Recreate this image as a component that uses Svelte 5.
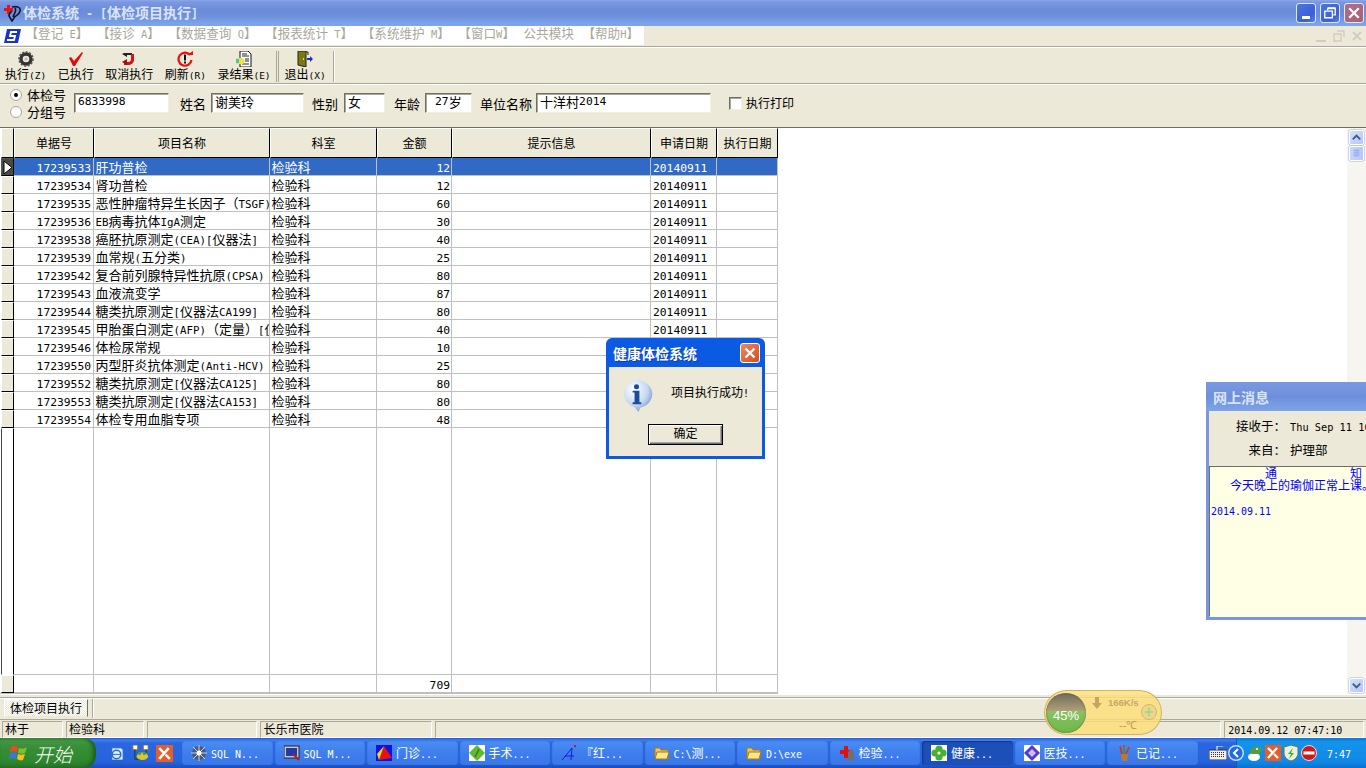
<script>
  const rows = [
    ['17239533','肝功普检','12'],['17239534','肾功普检','12'],['17239535','恶性肿瘤特异生长因子（TSGF)','60'],
    ['17239536','EB病毒抗体IgA测定','30'],['17239538','癌胚抗原测定(CEA)[仪器法]','40'],['17239539','血常规(五分类)','25'],
    ['17239542','复合前列腺特异性抗原(CPSA)','80'],['17239543','血液流变学','87'],['17239544','糖类抗原测定[仪器法CA199]','80'],
    ['17239545','甲胎蛋白测定(AFP)（定量）[仪器法]','40'],['17239546','体检尿常规','10'],['17239550','丙型肝炎抗体测定(Anti-HCV)','25'],
    ['17239552','糖类抗原测定[仪器法CA125]','80'],['17239553','糖类抗原测定[仪器法CA153]','80'],['17239554','体检专用血脂专项','48']
  ];
  const menus = ['【登记 E】','【接诊 A】','【数据查询 Q】','【报表统计 T】','【系统维护 M】','【窗口W】','公共模块','【帮助H】'];
  const heads = ['单据号','项目名称','科室','金额','提示信息','申请日期','执行日期'];
  const tasks = ['SQL N...','SQL M...','门诊...','手术...','『红...','C:\\测...','D:\\exe','检验...','健康...','医技...','已记...'];
  const runs = (s) => s.split(/([\x20-\x7e]+)/).filter(Boolean).map((x) => ({ x, l: /^[\x20-\x7e]/.test(x) }));
</script>

{#snippet t(s)}{#each runs(s) as r}<span class:l={r.l}>{r.x}</span>{/each}{/snippet}

{#snippet taskIcon(i)}
  <svg class="ti" viewBox="0 0 16 16">
    {#if i === 0}
      <circle cx="8" cy="8" r="7" fill="#4a5a78"/><path d="M8 0v16M0 8h16M2 2l12 12M14 2L2 14" stroke="#c8d0e0" stroke-width="1"/><circle cx="8" cy="8" r="2.5" fill="#fff"/>
    {:else if i === 1}
      <rect x="0" y="1" width="15" height="12" fill="#c8c8c8" stroke="#222"/><rect x="2" y="3" width="11" height="8" fill="#2438a8"/><path d="M9 9l6 6" stroke="#b02020" stroke-width="2"/>
    {:else if i === 2}
      <rect width="16" height="16" fill="#1010e0"/><path d="M8 1L16 13L3 15Z" fill="#e81010"/><path d="M8 1L3 15L1 9Z" fill="#f4d800"/>
    {:else if i === 3}
      <rect width="16" height="16" fill="#fff"/><path d="M8 0L16 8L8 16L0 8Z" fill="#58c030"/><path d="M6 12L10 4" stroke="#706020" stroke-width="1.5"/>
    {:else if i === 4}
      <path d="M1 15L11 3L10 15M4 11H13" stroke="#1020d0" fill="none"/><rect x="13" y="0" width="2" height="2" fill="#e01010"/>
    {:else if i === 5 || i === 6}
      <path d="M1 3h5l1 2h7v9H1Z" fill="#f0c850" stroke="#a87818"/><path d="M3 7h12l-2 7H1Z" fill="#fde88c" stroke="#a87818"/>
    {:else if i === 7}
      <path d="M5 1h4v4h4v4H9v4H5V9H1V5h4Z" fill="#e01010"/><path d="M9 7l3-3 3 4-1 5h2v2H7l2-3Z" fill="#707070"/>
    {:else if i === 8}
      <rect width="16" height="16" fill="#fff"/><circle cx="8" cy="4" r="3.6" fill="#48b030"/><circle cx="8" cy="12" r="3.6" fill="#48b030"/><circle cx="4" cy="8" r="3.6" fill="#48b030"/><circle cx="12" cy="8" r="3.6" fill="#48b030"/><circle cx="8" cy="8" r="1.6" fill="#fff"/>
    {:else if i === 9}
      <rect width="16" height="16" fill="#fff"/><path d="M8 0L16 8L8 16L0 8Z" fill="#5838c8"/><path d="M8 4L12 8L8 12L4 8Z" fill="#c8c0f4"/>
    {:else}
      <path d="M5 9h7l-1 7H6Z" fill="#b87838"/><path d="M6 9L4 1M8 9V0M10 9l3-7" stroke="#d83020" stroke-width="1.5"/><path d="M8 9V2" stroke="#38a030" stroke-width="1.5"/>
    {/if}
  </svg>
{/snippet}

<div class="app">
  <header class="title">
    <svg class="ticon" viewBox="0 0 18 18">
      <path d="M0 4h3V1h3v3h3v3H6v3H3V7H0Z" fill="#e8101c"/>
      <path d="M8 3c5-1 9 0 8 4-1 5-5 4-6 7l-2 3-3-5c0-3 1-3 3-5M11 4c2 3-1 6-2 9" fill="none" stroke="#101830" stroke-width="1.6"/>
    </svg>
    <span class="ttext">{@render t('体检系统 - [体检项目执行]')}</span>
    <span class="wbtns">
      <span class="wb"><i class="min"></i></span>
      <span class="wb"><svg viewBox="0 0 19 19"><path d="M7 4.5h8v7h-2M7 4.5v2M4 7.5h8v7H4Z" fill="none" stroke="#fff" stroke-width="1.4"/><path d="M7 4.5h8" stroke="#fff" stroke-width="2"/></svg></span>
      <span class="wb wred"><svg viewBox="0 0 19 19"><path d="M4.5 4.5l10 10M14.5 4.5l-10 10" stroke="#fff" stroke-width="2.4"/></svg></span>
    </span>
  </header>

  <nav class="menubar">
    <div class="menus">
      <svg class="mlogo" viewBox="0 0 17 16">
        <path d="M3 1h14l-3 14H0Z" fill="#1a34c8"/><path d="M13 4H7L6 8h5l-1 4H3" fill="none" stroke="#fff" stroke-width="1.8"/>
      </svg>
      {#each menus as m}<span class="mi">{@render t(m)}</span>{/each}
    </div>
    <div class="mdi">
      <span><i></i></span>
      <span><svg viewBox="0 0 16 14"><path d="M6 2h7v6M3 5h7v7H3Z" fill="none" stroke="#d0cdc0" stroke-width="1.4"/></svg></span>
      <span><svg viewBox="0 0 16 14"><path d="M4 3l8 8M12 3l-8 8" stroke="#d0cdc0" stroke-width="2"/></svg></span>
    </div>
  </nav>

  <section class="toolbar">
    <button class="tb">
      <svg viewBox="0 0 16 16"><circle cx="8" cy="8" r="5" fill="none" stroke="#333" stroke-width="3.4"/><circle cx="8" cy="8" r="7" fill="none" stroke="#555" stroke-width="1.6" stroke-dasharray="2 1.6"/><circle cx="8" cy="8" r="1.6" fill="#bbb"/></svg>
      <span>{@render t('执行(Z)')}</span>
    </button>
    <button class="tb">
      <svg viewBox="0 0 16 16"><path d="M1 7l2-1 3 4 8-9 1 1-8 13h-2Z" fill="#e00c10"/></svg>
      <span>{@render t('已执行')}</span>
    </button>
    <button class="tb">
      <svg viewBox="0 0 16 16"><path d="M3 2h8v2H6v2l-5-3Z" fill="#222"/><path d="M13 3v6c0 3-3 5-6 5H3v-3h4c2 0 3-1 3-3V3Z" fill="#c81818"/><path d="M1 11l5-3v6Z" fill="#a01010"/></svg>
      <span>{@render t('取消执行')}</span>
    </button>
    <button class="tb">
      <svg viewBox="0 0 16 16"><path d="M13 4A6.5 6.5 0 1 0 14.500 9" fill="none" stroke="#e81010" stroke-width="2.2"/><path d="M10 4h6V0Z" fill="#e81010"/><rect x="7" y="3.500" width="2" height="6" fill="#111"/><rect x="7" y="10.500" width="2" height="2" fill="#111"/></svg>
      <span>{@render t('刷新(R)')}</span>
    </button>
    <button class="tb">
      <svg viewBox="0 0 16 16"><path d="M4 0h8l3 3v13H4Z" fill="#fff" stroke="#111"/><path d="M6 3h5M6 5h7M9 8h4M9 10h4M6 13h7" stroke="#222"/><path d="M0 7h7l2 3-2 3H0Z" fill="#f4e040"/><rect x="0" y="8" width="3" height="4" fill="#30c8e8"/></svg>
      <span>{@render t('录结果(E)')}</span>
    </button>
    <i class="grip"></i>
    <button class="tb exit">
      <svg viewBox="0 0 16 16"><path d="M1 0h8v16l-8-2Z" fill="#7a7a10" stroke="#222"/><path d="M9 1h2v3" fill="none" stroke="#222"/><path d="M10 7h3V5l3 3-3 3V9h-3Z" fill="#1a30c0"/><rect x="6" y="7" width="1" height="2" fill="#f0e040"/></svg>
      <span>{@render t('退出(X)')}</span>
    </button>
    <i class="sep"></i>
  </section>

  <section class="form">
    <div class="radios">
      <label><i class="radio on"></i>体检号</label>
      <label><i class="radio"></i>分组号</label>
    </div>
    <span class="field w95">{@render t('6833998')}</span>
    <span class="lab m11">姓名</span>
    <span class="field w93">谢美玲</span>
    <span class="lab m8 r6">性别</span>
    <span class="field w41">女</span>
    <span class="lab m9">年龄</span>
    <span class="field w47 pad">{@render t('27')}岁</span>
    <span class="lab m8 r4">单位名称</span>
    <span class="field w175">十洋村{@render t('2014')}</span>
    <i class="check"></i>
    <span class="lab chk">执行打印</span>
  </section>

  <main class="content">
    <div class="table">
      <div class="tr head">
        <div class="ind"></div>
        {#each heads as h}<div class="hc">{h}</div>{/each}
      </div>
      {#each rows as r, i}
        <div class="tr row" class:sel={i === 0}>
          <div class="ind">{#if i === 0}<svg viewBox="0 0 11 15"><path d="M2 1l8 6.500L2 14Z" fill="#fff" stroke="#000"/></svg>{/if}</div>
          <div class="c num">{@render t(r[0])}</div>
          <div class="c">{@render t(r[1])}</div>
          <div class="c">检验科</div>
          <div class="c amt">{@render t(r[2])}</div>
          <div class="c"></div>
          <div class="c date">{@render t('20140911')}</div>
          <div class="c"></div>
        </div>
      {/each}
      <div class="tr filler">
        <div class="ind"></div>
        {#each heads as h}<div class="c"></div>{/each}
      </div>
      <div class="tr row total">
        <div class="ind"></div>
        <div class="c"></div><div class="c"></div><div class="c"></div>
        <div class="c amt">{@render t('709')}</div>
        <div class="c"></div><div class="c"></div><div class="c"></div>
      </div>
    </div>
    <aside class="scroll">
      <span class="sb"><svg viewBox="0 0 14 14"><path d="M3 9l4-4 4 4" fill="none" stroke="#41598c" stroke-width="2"/></svg></span>
      <span class="sb thumb"><svg viewBox="0 0 14 14"><path d="M4 3.500h6M4 5.500h6M4 7.500h6M4 9.500h6" stroke="#8aa4e8"/></svg></span>
      <span class="track"></span>
      <span class="sb"><svg viewBox="0 0 14 14"><path d="M3 5l4 4 4-4" fill="none" stroke="#41598c" stroke-width="2"/></svg></span>
    </aside>
  </main>

  <div class="tabs">
    <span class="tab">体检项目执行</span>
    <i class="tabsep"></i>
  </div>

  <footer class="status">
    <span class="p p1">林于</span>
    <span class="p p2">检验科</span>
    <span class="p p3"></span>
    <span class="p p4">长乐市医院</span>
    <span class="p p5"></span>
    <span class="p p6">{@render t('2014.09.12 07:47:10')}</span>
  </footer>

  <div class="taskbar">
    <button class="start">
      <svg viewBox="0 0 20 20"><path d="M2 4c3-2 5-1 7 0L8 9C6 8 4 8 1 9Z" fill="#e84c20"/><path d="M10 5c3 1 5 1 8-1l-2 6c-2 1-4 1-7 0Z" fill="#7cc030"/><path d="M1 10c3-1 5-1 7 0l-1 6c-2-1-4-1-7 0Z" fill="#3878d8"/><path d="M9 11c2 1 4 1 7 0l-2 6c-2 1-4 0-6-1Z" fill="#f4c020"/></svg>
      <em>开始</em>
    </button>
    <div class="quick">
      <svg viewBox="0 0 16 18"><path d="M3 3h10l2 2v11H3Z" fill="#e0ecfc" stroke="#2860c0"/><circle cx="8" cy="10" r="4.500" fill="none" stroke="#2070d8" stroke-width="1.6"/><path d="M4 10h8" stroke="#2070d8"/></svg>
      <svg viewBox="0 0 18 18"><rect x="1" y="0" width="5" height="5" fill="#fff" stroke="#a87818"/><rect x="12" y="0" width="5" height="5" fill="#fff" stroke="#a87818"/><path d="M3 5v10h6M15 5v3" stroke="#204010" fill="none"/><ellipse cx="11" cy="12" rx="6" ry="4" fill="#d8c828"/><circle cx="8" cy="9" r="1.600" fill="#48a030"/><circle cx="13" cy="9" r="1.600" fill="#48a030"/></svg>
      <svg viewBox="0 0 16 16"><rect width="16" height="16" fill="#e85c28"/><path d="M3 3l4 4M12 3L3 13M9 9l4 4" stroke="#fff" stroke-width="2.400"/></svg>
    </div>
    <div class="tasks">
      {#each tasks as k, i}
        <div class="task" class:active={i === 8}>
          {@render taskIcon(i)}
          <span>{@render t(k)}</span>
        </div>
      {/each}
    </div>
    <svg class="kbd" viewBox="0 0 18 14"><rect x="0" y="4" width="18" height="10" fill="#eee" stroke="#333"/><path d="M2 6.500h14M2 8.500h14M2 10.500h14" stroke="#333" stroke-dasharray="1 1"/><path d="M8 4V0h6" stroke="#fff" fill="none"/></svg>
    <div class="tray">
      <span class="chev"><svg viewBox="0 0 16 16"><path d="M10 4L6 8l4 4" fill="none" stroke="#fff" stroke-width="2"/></svg></span>
      <svg viewBox="0 0 16 16"><ellipse cx="7" cy="12" rx="6" ry="4" fill="#fff"/><path d="M3 8c0-5 5-7 9-6l3 3-3 4H5Z" fill="#5a9c30"/><circle cx="10" cy="4" r="1" fill="#fff"/></svg>
      <svg viewBox="0 0 16 16"><rect width="16" height="16" fill="#e85c28"/><path d="M3 3l4 4M12 3L3 13M9 9l4 4" stroke="#fff" stroke-width="2.400"/></svg>
      <svg viewBox="0 0 16 16"><path d="M8 0l7 2v6c0 4-3 7-7 8-4-1-7-4-7-8V2Z" fill="#e8f0e0" stroke="#587858"/><path d="M10 3L5 9h3l-2 5 5-6H8Z" fill="#48a828"/></svg>
      <svg viewBox="0 0 16 16"><circle cx="8" cy="8" r="7.500" fill="#d01818" stroke="#fff" stroke-width=".8"/><rect x="2.500" y="6.500" width="11" height="3" fill="#fff"/></svg>
      <time>{@render t('7:47')}</time>
    </div>
  </div>

  <!-- floating windows -->
  <div class="dialog">
    <div class="dtitle">
      <b>健康体检系统</b>
      <span class="dclose"><svg viewBox="0 0 20 20"><path d="M5 5l10 10M15 5L5 15" stroke="#fff" stroke-width="2.600"/></svg></span>
    </div>
    <div class="dbody">
      <div class="dmsg">
        <svg viewBox="0 0 34 34">
          <defs><radialGradient id="bub" cx=".35" cy=".3" r=".8"><stop offset="0" stop-color="#fff"/><stop offset=".6" stop-color="#c4d8f0"/><stop offset="1" stop-color="#6c90c8"/></radialGradient></defs>
          <path d="M17 1a16 14.500 0 0 1 4 28.600L19 34l-4-5A16 14.500 0 0 1 17 1Z" fill="url(#bub)"/>
          <circle cx="17" cy="8" r="2.600" fill="#1c4c98"/><path d="M13 12h7v12h2v2h-9v-2h2V14h-2Z" fill="#1c4c98"/>
        </svg>
        <span>{@render t('项目执行成功!')}</span>
      </div>
      <button class="ok"><span>确定</span></button>
    </div>
  </div>

  <div class="msg">
    <div class="mtitle">网上消息</div>
    <div class="mform">
      <div class="mrow r1"><span class="k">接收于：</span><span>{@render t('Thu Sep 11 16:20')}</span></div>
      <div class="mrow r2"><span class="k">来自：</span><span>护理部</span></div>
    </div>
    <div class="mtext">
      <div class="m1"><span>通</span><span>知</span></div>
      <div class="m2">今天晚上的瑜伽正常上课。</div>
      <div class="m3">{@render t('2014.09.11')}</div>
    </div>
  </div>

  <div class="widget">
    <div class="ball"><span>45%</span></div>
    <svg class="dl" viewBox="0 0 12 12"><path d="M4 0h4v6h3L6 12 1 6h3Z" fill="#c8a460"/></svg>
    <span class="sp">166K/s</span>
    <span class="tp">--℃</span>
    <span class="plus"><svg viewBox="0 0 12 12"><path d="M6 1v10M1 6h10" stroke="#a8d878" stroke-width="2.400"/></svg></span>
  </div>
</div>

<style>
  :global(body) { margin: 0; background: #fff; }
  * { box-sizing: border-box; }
  i { display: block; }
  .app {
    position: relative; width: 1366px; height: 768px; overflow: hidden;
    display: flex; flex-direction: column;
    background: #ece9d8; color: #000;
    font: 13px/1 "Noto Sans CJK SC", sans-serif;
  }
  .l { font-family: "DejaVu Sans Mono", monospace; font-size: .83em; white-space: pre; }
  button { font: inherit; color: inherit; padding: 0; margin: 0; border: 0; background: none; }

  .title {
    height: 26px; flex: none; display: flex; align-items: center; padding: 0 2px 0 4px;
    background: linear-gradient(#8ea8e6 0, #7a98e2 2px, #6c8cda 10px, #6e90dc 16px, #7ca4ea 24px, #7ca4ea 100%);
  }
  .ticon { width: 18px; height: 18px; margin-right: 1px; }
  .ttext { font-size: 14px; font-weight: 700; color: #dbe4f6; white-space: pre; }
  .wbtns { margin-left: auto; display: flex; gap: 4px; }
  .wb {
    width: 20px; height: 20px; border: 1px solid #dfe8fa; border-radius: 3px; position: relative;
    background: linear-gradient(135deg, #4a78dc, #3a5fd4 70%, #5a84e4);
  }
  .wb svg { width: 18px; height: 18px; display: block; }
  .wred { background: linear-gradient(135deg, #b07088, #a86078); }
  .min { position: absolute; left: 5px; bottom: 3px; width: 8px; height: 3px; background: #fff; }

  .menubar {
    height: 21px; flex: none; display: flex; justify-content: space-between; align-items: flex-start;
    border-bottom: 1px solid #aca899;
  }
  .menus {
    width: 644px; height: 19px; background: #fff; display: flex; align-items: center; gap: 8.500px;
    padding-left: 4px; color: #aaa799; white-space: nowrap;
  }
  .mlogo { width: 17px; height: 16px; margin-right: -4px; flex: none; }
  .mi { font-size: 12.600px; margin-top: -4px; }
  .mdi { display: flex; gap: 2px; padding: 3px 1px 0 0; }
  .mdi span { width: 16px; height: 14px; position: relative; }
  .mdi svg { width: 16px; height: 14px; display: block; }
  .mdi i { position: absolute; left: 3px; bottom: 1px; width: 10px; height: 2px; background: #d0cdc0; }

  .toolbar {
    height: 37px; flex: none; display: flex; align-items: stretch; padding-left: 5px; gap: 11.500px;
    border-top: 1px solid #fff; border-bottom: 1px solid #aca899; font-size: 12px;
  }
  .tb { display: flex; flex-direction: column; align-items: center; padding-top: 3px; white-space: nowrap; }
  .tb svg { width: 16px; height: 16px; display: block; flex: none; }
  .tb span { line-height: 14px; }
  .tb .l { font-size: 9.500px; }
  .grip { width: 3px; margin: 3px 0 0 -6px; height: 31px; border-left: 1px solid #aca899; border-right: 1px solid #aca899; }
  .exit { margin-left: -6px; }
  .sep { width: 2px; margin: 3px 0 0 -4px; height: 31px; border-left: 1px solid #aca899; border-right: 1px solid #fff; }

  .form {
    height: 43px; flex: none; display: flex; align-items: center; border-top: 1px solid #fff;
    padding: 0 0 6px 0; font-size: 13px; white-space: nowrap;
  }
  .radios { width: 74px; display: flex; flex-direction: column; gap: 4px; padding-left: 10px; }
  .radios label { display: flex; align-items: center; gap: 5px; height: 13px; line-height: 13px; }
  .radio {
    width: 12px; height: 12px; border-radius: 50%; background: #fff; border: 1px solid #aaa699; position: relative;
  }
  .radio.on::after { content: ""; position: absolute; left: 3px; top: 3px; width: 4px; height: 4px; background: #000; border-radius: 50%; }
  .field {
    height: 20px; background: #fff; display: flex; align-items: center; padding: 0 0 2px 3px;
    border: 1px solid; border-color: #716f64 #f1efe2 #f1efe2 #716f64;
    box-shadow: inset 1px 1px 0 #aca899; overflow: hidden; line-height: 16px;
  }
  .field .l { font-size: 11.300px; }
  .pad { padding-left: 9px; }
  .w95 { width: 95px; } .w93 { width: 93px; } .w41 { width: 41px; } .w47 { width: 47px; } .w175 { width: 175px; }
  .lab { margin-right: 5px; }
  .m11 { margin-left: 11px; } .m8 { margin-left: 8px; } .m9 { margin-left: 9px; }
  .r6 { margin-right: 6px; } .r4 { margin-right: 4px; }
  .chk { margin: 0 0 0 4px; font-size: 12px; }
  .check {
    width: 13px; height: 13px; margin-left: 18px; background: #fff; border: 1px solid;
    border-color: #716f64 #f1efe2 #f1efe2 #716f64;
    box-shadow: inset 1px 1px 0 #aca899;
  }

  .content {
    height: 568px; flex: none; display: flex; justify-content: space-between; background: #fff;
    border-top: 1px solid #716f64;
  }
  .table { width: 778px; display: flex; flex-direction: column; padding-left: 1px; border-bottom: 1px solid #c0c0c0; height: 566px; }
  .tr { display: grid; grid-template-columns: 13px 80px 176px 107px 75px 199px 66px 61px; flex: none; }
  .head { height: 30px; }
  .row { height: 18px; }
  .filler { flex: 1; }
  .ind {
    background: #ece9d8; border: 1px solid; border-color: #fff #000 #000 #fff;
    display: flex; align-items: center; justify-content: center;
  }
  .ind svg { width: 11px; height: 15px; flex: none; }
  .filler .ind { background: #fff; border-color: #fff #000 #fff #444; }
  .hc {
    background: #ece9d8; font-size: 12px; display: flex; align-items: center; justify-content: center;
    border: 1px solid; border-color: #fff #000 #000 #fff; padding-bottom: 1px;
  }
  .c {
    border-right: 1px solid #c0c0c0; border-bottom: 1px solid #c0c0c0; overflow: hidden; white-space: nowrap;
    padding: 0 1px 0 1.500px; line-height: 17px; font-size: 13px;
  }
  .num { text-align: right; padding-right: 2px; }
  .date { padding-left: 2px; }
  .num .l, .date .l, .amt .l { font-size: 11.300px; }
  .amt { text-align: right; }
  .sel .c { background: #316ac5; color: #fff; }
  .sel .ind { background: #4a4a46; border-color: #555 #000 #000 #555; }

  .scroll { width: 19px; display: flex; flex-direction: column; gap: 1px; background: #f6f5ef; padding: 2px 3px 1px 2px; height: 566px; }
  .sb {
    flex: none; width: 15px; height: 15px; border: 1px solid #fff; border-radius: 2px;
    background: linear-gradient(135deg, #d4e0fb, #b4c8f6);
    box-shadow: 0 0 0 .5px #9cb4e6;
  }
  .sb svg { display: block; width: 13px; height: 13px; }
  .thumb { background: linear-gradient(90deg, #c8d4f8, #b8c8f6); }
  .track { flex: 1; }

  .tabs { height: 22px; flex: none; display: flex; border-top: 1px solid #aca899; padding: 1px 0 0 4px; box-shadow: inset 0 1px 0 #fff; margin-top: 2px; }
  .tab {
    width: 84px; height: 18px; font-size: 12px; line-height: 16px; text-align: center;
    background: repeating-conic-gradient(#fff 0 25%, #ece9d8 0 50%) 0 0/2px 2px;
    border: 1px solid; border-color: #fff #716f64 #ece9d8 #fff;
  }
  .tabsep { width: 2px; height: 19px; margin-left: 4px; border-left: 1px solid #aca899; border-right: 1px solid #fff; }

  .status { height: 19px; flex: none; display: flex; gap: 3px; padding: 1px 2px 0 2px; border-top: 1px solid #aca899; font-size: 12px; }
  .p { height: 17px; line-height: 13px; padding-left: 2px; border: 1px solid; border-color: #aca899 #fff #fff #aca899; white-space: nowrap; }
  .p1 { width: 61px; } .p2 { width: 78px; } .p3 { width: 111px; } .p4 { width: 172px; } .p5 { width: 788px; }
  .p6 { width: 140px; padding-left: 3px; }

  .taskbar {
    flex: none; height: 30px; margin-top: auto; display: flex; align-items: center; position: relative; color: #fff;
    background: linear-gradient(#1f55d0 0, #3e80ee 2px, #2a66e0 5px, #2563dc 24px, #1a4cc0 100%);
    font-size: 12px;
  }
  .start {
    width: 96px; height: 30px; flex: none; display: flex; align-items: center; gap: 5px; padding-left: 9px;
    border-radius: 0 12px 12px 0; color: #fff;
    background: linear-gradient(#4a9c4a 0, #378f37 30%, #2f8a2f 70%, #2a7a2a 100%);
    box-shadow: inset -3px 0 4px #1c5c1c;
  }
  .start svg { width: 20px; height: 20px; }
  .start em { font-size: 19px; font-style: italic; font-weight: 300; }
  .quick { display: flex; gap: 7px; margin-left: 12px; width: 74px; flex: none; }
  .quick svg { width: 17px; height: 17px; display: block; }
  .tasks { display: flex; gap: 2px; flex: none; }
  .task {
    width: 90.500px; height: 24px; border-radius: 3px; display: flex; align-items: center; padding-left: 9px; gap: 4px;
    background: linear-gradient(#4a8cf4, #3d7cec 60%, #3a78ea);
    box-shadow: inset 0 0 1px #1c50b8; white-space: nowrap;
  }
  .task.active { background: #1c4fb8; box-shadow: inset 1px 1px 2px #103880; }
  .ti { width: 16px; height: 16px; flex: none; }
  .kbd { width: 18px; height: 14px; flex: none; margin-left: 11.500px; }
  .tray {
    position: absolute; right: 0; top: 0; width: 130px; height: 30px; display: flex; align-items: center; gap: 2px;
    background: linear-gradient(#0c77d8, #1494ec 4px, #1088e4 80%, #0a70d0); border-left: 1px solid #0b5cb4;
  }
  .chev { width: 16px; height: 16px; margin-left: -9px; border-radius: 50%; background: radial-gradient(#1c6ce4 55%, #c8dcfa 60%); flex: none; }
  .chev svg { display: block; }
  .tray > svg { width: 16px; height: 16px; flex: none; }
  .tray > svg:nth-child(2) { margin-left: 1px; }
  .tray time { margin-left: 8px; font-size: 12px; }

  .dialog {
    position: absolute; left: 606px; top: 338px; width: 159px; height: 121px; display: flex; flex-direction: column;
    border-radius: 6px 6px 0 0; background: #0a5ae4; padding: 0 3px 3px;
  }
  .dtitle {
    height: 29px; flex: none; display: flex; align-items: center; justify-content: space-between; padding: 0 2px 0 4px;
    color: #fff; font-size: 14px; text-shadow: 1px 1px 0 #0a3ca8;
  }
  .dclose { width: 20px; height: 20px; border: 1px solid #fff; border-radius: 3px; background: linear-gradient(135deg, #e88a60, #d84a20); }
  .dclose svg { display: block; width: 18px; height: 18px; }
  .dbody { flex: 1; background: #ece9d8; display: flex; flex-direction: column; align-items: center; padding-top: 11px; }
  .dmsg { display: flex; align-items: center; width: 100%; padding-left: 11px; height: 34px; }
  .dmsg svg { width: 33px; height: 33px; flex: none; }
  .dmsg > span { margin: -5px 0 0 18px; font-size: 12px; white-space: nowrap; }
  .ok {
    width: 75px; height: 21px; margin-top: 12px; font-size: 12px; background: #ece9d8;
    border: 1px solid #000; box-shadow: inset 1px 1px 0 #fff, inset -1px -1px 0 #716f64, inset -2px -2px 0 #aca899;
  }
  .ok span { display: block; margin-top: -3px; }

  .msg {
    position: absolute; left: 1206px; top: 382px; width: 160px; height: 238px; display: flex; flex-direction: column;
    border-radius: 5px 0 0 0; background: #7b96df; padding: 0 0 3px 3px;
  }
  .mtitle {
    height: 29px; flex: none; display: flex; align-items: center; font-size: 14px; font-weight: 700; color: #dbe4f6;
    background: linear-gradient(#7a98e0, #6e90dc 50%, #7ca4ea);
    margin-left: -3px; padding-left: 7px;
  }
  .mform { height: 55px; flex: none; background: #ece9d8; font-size: 12.500px; white-space: nowrap; overflow: hidden; padding-left: 81px; }
  .mform .l { font-size: 10.300px; }
  .mrow { position: relative; height: 24px; display: flex; align-items: center; }
  .r1 { margin-top: 3px; }
  .k { position: absolute; right: calc(100% + 4px); }
  .mtext { flex: 1; background: #ffffe6; border: 1px solid; border-color: #716f64 #fff #fff #716f64; border-width: 1px 0 1px 1px; color: #0000ff; font-size: 12px; white-space: nowrap; overflow: hidden; line-height: 12px; padding-left: 1px; }
  .m1 { display: flex; padding-left: 54px; gap: 73px; height: 12px; }
  .m2 { padding-left: 19px; height: 12px; }
  .m3 { margin-top: 13px; }

  .widget {
    position: absolute; left: 1044px; top: 690px; width: 118px; height: 45px; border-radius: 23px;
    background: rgba(253, 222, 120, .82); border: 1px solid rgba(205, 175, 90, .9);
    font: 10px "Liberation Sans", sans-serif; color: #c4a060;
  }
  .ball {
    position: absolute; left: 1px; top: 2px; width: 40px; height: 40px; border-radius: 50%; overflow: hidden;
    background: linear-gradient(#6e6a5e 0, #b0a078 45%, #8cc060 46%, #6cb848 100%);
    box-shadow: inset 0 0 2px #605840;
    display: flex; align-items: center; justify-content: center; color: #fff; font-size: 13px; padding-top: 4px;
  }
  .dl { position: absolute; left: 46px; top: 6px; width: 12px; height: 12px; }
  .sp { position: absolute; left: 63px; top: 6px; font-weight: 700; font-size: 9.500px; color: #c8a868; }
  .tp { position: absolute; left: 74px; top: 26px; font-size: 11px; color: #b89a58; }
  .plus {
    position: absolute; left: 96px; top: 13px; width: 16px; height: 16px; border-radius: 50%;
    background: #ecd690; border: 1px solid #d4b868; display: flex; align-items: center; justify-content: center;
  }
  .plus svg { width: 10px; height: 10px; display: block; }
</style>
